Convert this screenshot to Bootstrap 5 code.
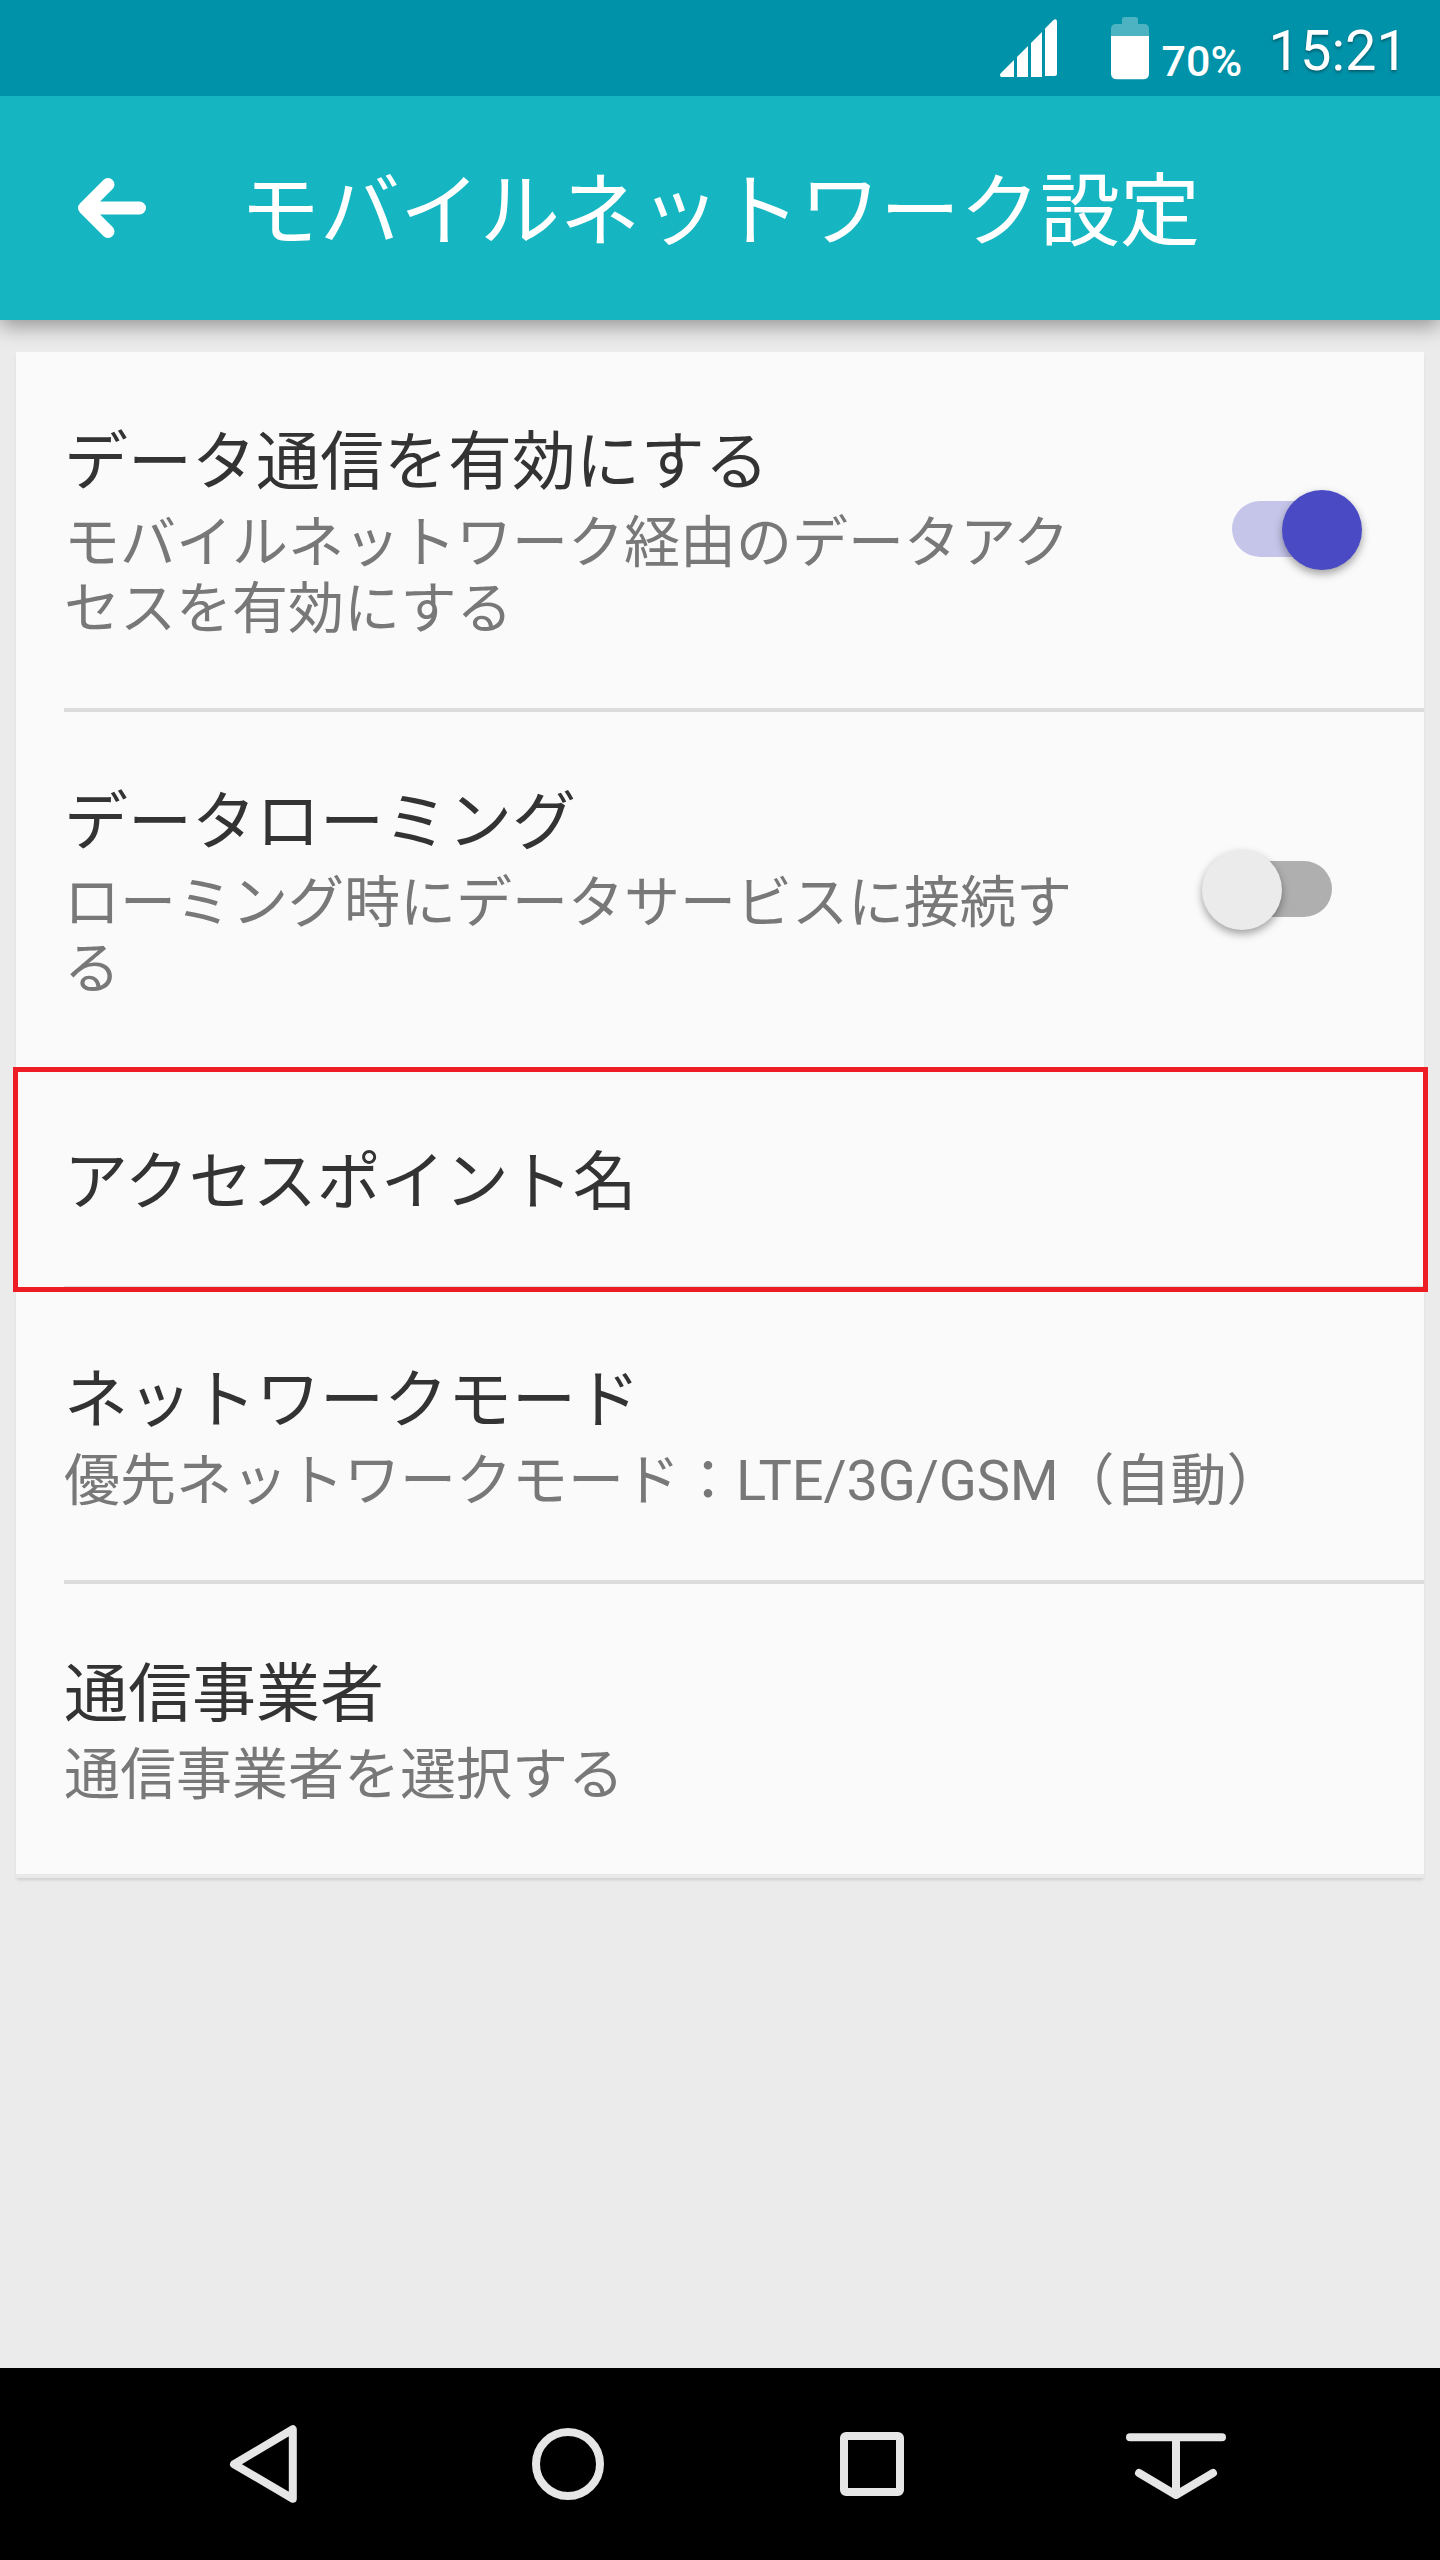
<!DOCTYPE html>
<html lang="ja">
<head>
<meta charset="utf-8">
<meta name="viewport" content="width=device-width, initial-scale=1">
<title>モバイルネットワーク設定</title>
<link rel="stylesheet" href="https://cdn.jsdelivr.net/npm/bootstrap@5.3.0/dist/css/bootstrap.min.css">
<style>
  body {
    font-family: Roboto, "Noto Sans CJK JP", sans-serif;
    background: #ebebeb;
    width: 1440px;
    height: 2560px;
    overflow: hidden;
  }
  svg { display: block; flex: none; }

  /* Status bar */
  .status-bar { height: 96px; background: #0092a9; padding-right: 32px; z-index: 2; }
  .status-signal { margin-right: 54px; }
  .battery-level { font-size: 43px; line-height: 50px; font-weight: 500; padding-top: 25px; margin: 0 25px 0 13px; width: 82px; }
  .clock { font-size: 56px; line-height: 66px; padding-top: 6px; text-shadow: 0 2px 3px rgba(0, 0, 0, .35); }

  /* App bar */
  .app-bar { height: 224px; background: #15b6c1; padding-left: 77px; box-shadow: 0 6px 20px rgba(0, 0, 0, .38); z-index: 1; }
  .app-title { font-size: 80px; line-height: 94px; padding-top: 7px; margin-left: 93px; }

  /* Settings list */
  .settings { margin: 32px 16px 0; background: #fafafa; box-shadow: 0 3px 3px -1px rgba(0, 0, 0, .12); }
  .setting { padding: 73px 0 0 48px; }
  .setting::after { content: ""; position: absolute; left: 48px; right: 0; bottom: 0; height: 4px; background: #dcdcdc; }
  .setting:last-child::after { left: 0; background: #e8e8e8; }
  .setting-tall { height: 360px; }
  .setting-mid { height: 294px; }
  .setting-short { height: 218px; }
  .setting-name { font-size: 64px; line-height: 75px; color: #333; }
  .setting-note { font-size: 56px; line-height: 66px; color: #787878; margin-top: 10px; }
  .note-narrow { width: 1020px; }
  .note-latin { letter-spacing: -.15px; }
  .highlight { inset: -5px -4px -2px -3px; border: 5px solid #ee1c25; z-index: 2; }

  /* Toggle */
  .toggle { width: 100px; height: 56px; border-radius: 28px; margin: 76px 92px 0 0; background: #afafaf; flex: none; }
  .toggle i { position: absolute; top: -11px; left: -30px; width: 80px; height: 80px; border-radius: 50%; background: #ebebeb; box-shadow: 0 4px 8px rgba(0, 0, 0, .36); }
  .toggle-on { background: #c5c5ea; }
  .toggle-on i { left: 50px; background: #4a4ac5; }

  /* Navigation bar */
  .nav-keys { height: 192px; padding: 0 112px; background: #000; }
  .nav-keys svg { fill: none; stroke: #e6e6e6; stroke-width: 8; stroke-linejoin: round; stroke-linecap: round; }
</style>
</head>
<body class="d-flex flex-column m-0">

  <header class="status-bar position-relative d-flex justify-content-end text-white flex-shrink-0">
    <svg class="status-signal" width="57" height="96" fill="#fff">
      <path d="M14 60V77H1Q-1 75 1 73Z"/>
      <path d="M17 57L28 46V77H17Z"/>
      <path d="M31 43L42 32V77H31Z"/>
      <path d="M45 28.500L53 20.500Q57 17.500 57 22V73.500Q57 76 54.500 76H45Z"/>
    </svg>
    <svg width="38" height="96">
      <path fill="#4db3c3" d="M0 36V29Q0 24 5 24H11V19.500Q11 17 13.500 17H24.500Q27 17 27 19.500V24H33Q38 24 38 29V36Z"/>
      <path fill="#fff" d="M0 36H38V73.500Q38 79.300 32 79.300H6Q0 79.300 0 73.500Z"/>
    </svg>
    <div class="battery-level align-self-center">70%</div>
    <div class="clock align-self-center">15:21</div>
  </header>

  <nav class="app-bar d-flex align-items-center position-relative text-white flex-shrink-0">
    <svg width="70" height="62" viewBox="0 0 70 62" fill="none" stroke="#fff" stroke-width="13" stroke-linecap="round" stroke-linejoin="round">
      <path d="M31 7.500L7.500 31L31 54.500M9 31H62.500"/>
    </svg>
    <h1 class="app-title mb-0 fw-normal">モバイルネットワーク設定</h1>
  </nav>

  <main class="flex-grow-1">
    <section class="settings">
      <div class="setting setting-tall position-relative d-flex justify-content-between">
        <div>
          <div class="setting-name">データ通信を有効にする</div>
          <div class="setting-note note-narrow">モバイルネットワーク経由のデータアクセスを有効にする</div>
        </div>
        <div class="toggle toggle-on position-relative" role="switch" aria-checked="true"><i></i></div>
      </div>
      <div class="setting setting-tall position-relative d-flex justify-content-between">
        <div>
          <div class="setting-name">データローミング</div>
          <div class="setting-note note-narrow">ローミング時にデータサービスに接続する</div>
        </div>
        <div class="toggle position-relative" role="switch" aria-checked="false"><i></i></div>
      </div>
      <div class="setting setting-short position-relative">
        <div class="setting-name">アクセスポイント名</div>
        <div class="highlight position-absolute"></div>
      </div>
      <div class="setting setting-mid position-relative">
        <div class="setting-name">ネットワークモード</div>
        <div class="setting-note">優先ネットワークモード：<span class="note-latin">LTE/3G/GSM</span>（自動）</div>
      </div>
      <div class="setting setting-mid position-relative">
        <div class="setting-name">通信事業者</div>
        <div class="setting-note">通信事業者を選択する</div>
      </div>
    </section>
  </main>

  <footer class="nav-keys d-flex align-items-center flex-shrink-0">
    <div class="flex-fill d-flex justify-content-center">
      <svg width="104" height="104" viewBox="0 0 104 104"><path d="M80.800 17.200V86.800L22 52.200Z"/></svg>
    </div>
    <div class="flex-fill d-flex justify-content-center">
      <svg width="104" height="104" viewBox="0 0 104 104"><circle cx="52" cy="52" r="32"/></svg>
    </div>
    <div class="flex-fill d-flex justify-content-center">
      <svg width="104" height="104" viewBox="0 0 104 104"><rect x="24" y="24" width="56" height="56" rx="2"/></svg>
    </div>
    <div class="flex-fill d-flex justify-content-center">
      <svg width="104" height="104" viewBox="0 0 104 104"><path d="M6 25.200H98M52 25.200V82M15 61L52 83L89 61"/></svg>
    </div>
  </footer>

<script src="https://cdn.jsdelivr.net/npm/bootstrap@5.3.0/dist/js/bootstrap.bundle.min.js"></script>
</body>
</html>
